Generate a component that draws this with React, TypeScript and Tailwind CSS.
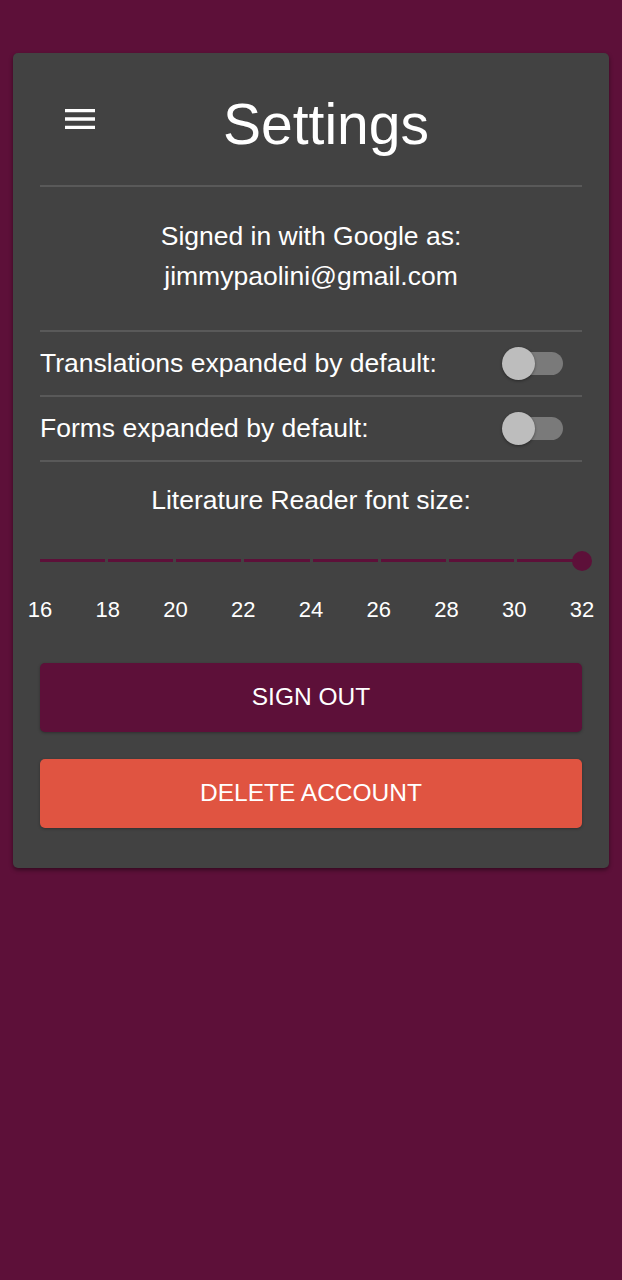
import React from 'react'

const marks = [16, 18, 20, 22, 24, 26, 28, 30, 32]

function MenuIcon() {
  return (
    <svg viewBox="0 0 24 24" className="h-10 w-10" fill="white">
      <path d="M3 18h18v-2H3v2zm0-5h18v-2H3v2zm0-7v2h18V6H3z" />
    </svg>
  )
}

function Toggle() {
  return (
    <div className="relative flex h-[33px] w-[61px] items-center">
      <div className="ml-[5px] h-[23px] w-[56px] rounded-full bg-[#7a7a7a]" />
      <div className="absolute left-0 top-0 h-[33px] w-[33px] rounded-full bg-[#bdbdbd] shadow-[0_1px_3px_rgba(0,0,0,0.4)]" />
    </div>
  )
}

function Row({ label }: { label: string }) {
  return (
    <div className="flex h-[65px] items-center justify-between border-b-2 border-[#595959]">
      <span className="text-[26.5px]">{label}</span>
      <div className="mr-[19px]">
        <Toggle />
      </div>
    </div>
  )
}

export default function App() {
  return (
    <div
      className="min-h-[1280px] bg-[#5d1039] px-[13px] pt-[53px] text-white"
      style={{ fontFamily: '"Liberation Sans", Arial, sans-serif' }}
    >
      <div className="rounded-[5px] bg-[#424242] px-[27px] pb-[40px] shadow-[0_2px_4px_rgba(0,0,0,0.45)]">
        {/* Header */}
        <div className="flex h-[134px] items-center border-b-2 border-[#595959]">
          <div className="ml-[20px]">
            <MenuIcon />
          </div>
          <h1 className="mt-[10px] flex-1 pr-[30px] text-center text-[57px] leading-none">Settings</h1>
        </div>

        {/* Account */}
        <div className="border-b-2 border-[#595959] pb-[34px] pt-[29px] text-center text-[26.5px] leading-[40px]">
          <div>Signed in with Google as:</div>
          <div>jimmypaolini@gmail.com</div>
        </div>

        <Row label="Translations expanded by default:" />
        <Row label="Forms expanded by default:" />

        {/* Font size slider */}
        <div className="pt-[24px] text-center text-[26.5px] leading-[28px]">Literature Reader font size:</div>
        <div className="relative mt-[45px] flex h-[3px] gap-[3px]">
          {marks.slice(1).map((m) => (
            <div key={m} className="h-[3px] flex-1 bg-[#5d1039]" />
          ))}
          <div className="absolute right-[-10px] top-[-8px] h-[20px] w-[20px] rounded-full bg-[#5d1039]" />
        </div>
        <div className="-mx-[20px] mt-[35px] flex justify-between text-[22px] leading-[26px]">
          {marks.map((m) => (
            <span key={m} className="w-[40px] text-center">
              {m}
            </span>
          ))}
        </div>

        {/* Buttons */}
        <button className="mt-[40px] flex h-[69px] w-full items-center justify-center rounded-[5px] bg-[#5d1039] text-[24.5px] font-medium shadow-[0_1px_3px_rgba(0,0,0,0.3)]">
          SIGN OUT
        </button>
        <button className="mt-[27px] flex h-[69px] w-full items-center justify-center rounded-[5px] bg-[#e05441] text-[24.5px] font-medium shadow-[0_1px_3px_rgba(0,0,0,0.3)]">
          DELETE ACCOUNT
        </button>
      </div>
    </div>
  )
}
